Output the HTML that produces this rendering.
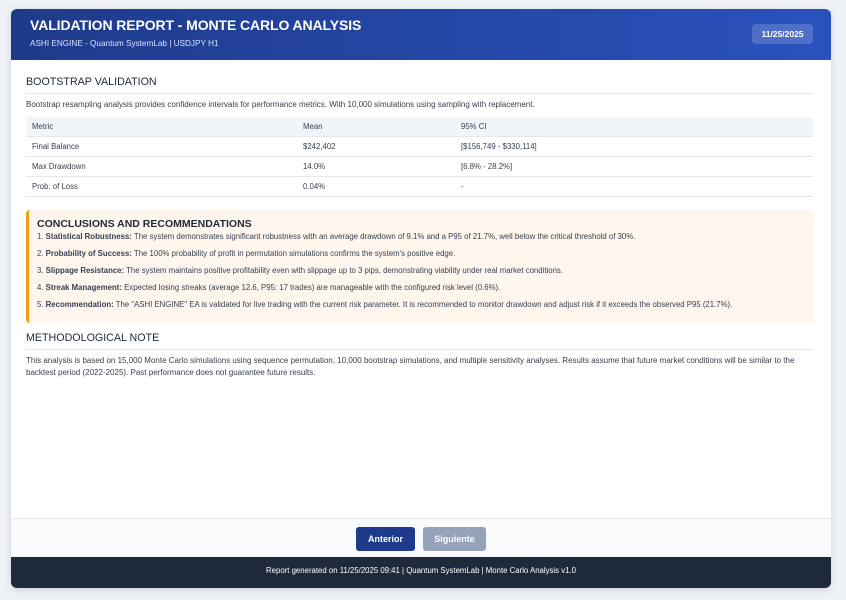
<!DOCTYPE html>
<html><head><meta charset="utf-8"><style>
*{box-sizing:border-box;margin:0;padding:0}
body{width:846px;height:600px;background:#eef1f5;font-family:"Liberation Sans",sans-serif;color:#1f2937;overflow:hidden;position:relative}
.c{position:absolute;left:11px;top:9px;width:820px;height:579px;background:#fff;border-radius:6px;overflow:hidden;box-shadow:0 2px 8px rgba(0,0,0,.12)}
.hd{height:51px;background:linear-gradient(90deg,#1e3a8a,#2a52be);position:relative;color:#fff}
.hd h1{position:absolute;left:19px;top:8px;font-size:14px;font-weight:bold;letter-spacing:-.1px}
.hd .s{position:absolute;left:19px;top:30px;font-size:8.2px;color:#dbe4ff}
.hd .d{position:absolute;left:741px;top:15px;width:61px;height:20px;border-radius:4px;background:rgba(255,255,255,.18);font-size:8.5px;font-weight:bold;text-align:center;line-height:20px}
.h2{position:absolute;left:15px;font-size:10.7px;color:#1f2937}
.ln{position:absolute;left:15px;width:787px;height:1px;background:#e5e7eb}
.p{position:absolute;left:15px;font-size:8px;color:#374151;line-height:12px}
table{position:absolute;left:15px;top:108px;width:787px;border-collapse:collapse;font-size:7.8px;color:#374151}
td{padding:0 6px;height:20.3px;border-bottom:1px solid #e5e7eb}
tr.th td{background:#f1f5f9;height:19px}
.cb{position:absolute;left:15px;top:201px;width:787px;height:113px;background:#fff7ed;border-left:3px solid #f59e0b;border-radius:4px}
.cb h3{position:absolute;left:8px;top:8px;font-size:10.5px;font-weight:bold;color:#1f2937}
.cb div{position:absolute;left:8px;font-size:7.8px;color:#374151;white-space:nowrap}
.bb{position:absolute;left:0;top:509px;width:820px;height:39px;background:#f8fafc;border-top:1px solid #e5e7eb}
.bt{position:absolute;top:8px;height:24px;border-radius:3px;color:#fff;font-size:9px;font-weight:bold;text-align:center;line-height:24px}
.ft{position:absolute;left:0;top:548px;width:820px;height:31px;background:#1e293b;color:#fff;font-size:7.8px;text-align:center;line-height:27px}
</style></head><body><div class="c">
<div class="hd"><h1>VALIDATION REPORT - MONTE CARLO ANALYSIS</h1><div class="s">ASHI ENGINE - Quantum SystemLab | USDJPY H1</div><div class="d">11/25/2025</div></div>
<div class="h2" style="top:67px">BOOTSTRAP VALIDATION</div><div class="ln" style="top:84px"></div>
<div class="p" style="top:90px">Bootstrap resampling analysis provides confidence intervals for performance metrics. With 10,000 simulations using sampling with replacement.</div>
<table><colgroup><col style="width:271px"><col style="width:158px"><col></colgroup>
<tr class="th"><td>Metric</td><td>Mean</td><td>95% CI</td></tr>
<tr><td>Final Balance</td><td>$242,402</td><td>[$156,749 - $330,114]</td></tr>
<tr><td>Max Drawdown</td><td>14.0%</td><td>[6.8% - 28.2%]</td></tr>
<tr><td>Prob. of Loss</td><td>0.04%</td><td>-</td></tr></table>
<div class="cb"><h3>CONCLUSIONS AND RECOMMENDATIONS</h3>
<div style="top:22px">1. <b>Statistical Robustness:</b> The system demonstrates significant robustness with an average drawdown of 9.1% and a P95 of 21.7%, well below the critical threshold of 30%.</div>
<div style="top:39px">2. <b>Probability of Success:</b> The 100% probability of profit in permutation simulations confirms the system's positive edge.</div>
<div style="top:56px">3. <b>Slippage Resistance:</b> The system maintains positive profitability even with slippage up to 3 pips, demonstrating viability under real market conditions.</div>
<div style="top:73px">4. <b>Streak Management:</b> Expected losing streaks (average 12.6, P95: 17 trades) are manageable with the configured risk level (0.6%).</div>
<div style="top:90px">5. <b>Recommendation:</b> The "ASHI ENGINE" EA is validated for live trading with the current risk parameter. It is recommended to monitor drawdown and adjust risk if it exceeds the observed P95 (21.7%).</div></div>
<div class="h2" style="top:323px">METHODOLOGICAL NOTE</div><div class="ln" style="top:340px"></div>
<div class="p" style="top:346px;width:787px">This analysis is based on 15,000 Monte Carlo simulations using sequence permutation, 10,000 bootstrap simulations, and multiple sensitivity analyses. Results assume that future market conditions will be similar to the backtest period (2022-2025). Past performance does not guarantee future results.</div>
<div class="bb"><div class="bt" style="left:345px;width:59px;background:#1e3a8a">Anterior</div><div class="bt" style="left:412px;width:63px;background:#94a3b8">Siguiente</div></div>
<div class="ft">Report generated on 11/25/2025 09:41 | Quantum SystemLab | Monte Carlo Analysis v1.0</div>
</div></body></html>
